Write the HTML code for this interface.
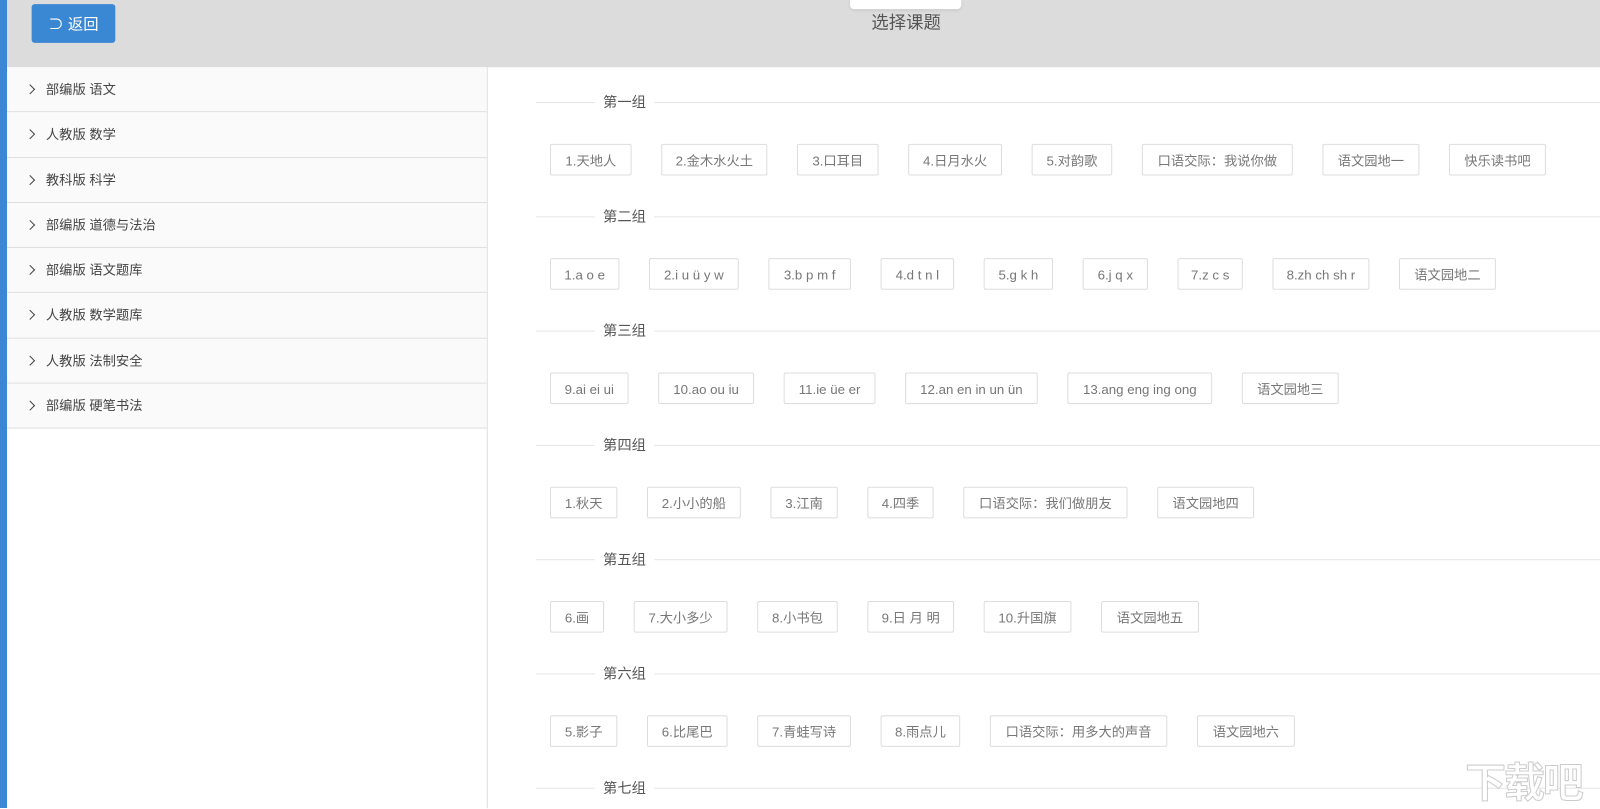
<!DOCTYPE html>
<html><head><meta charset="utf-8"><style>
*{margin:0;padding:0;box-sizing:border-box}
html,body{width:1600px;height:808px;overflow:hidden;background:#fff;font-family:"Liberation Sans","Noto Sans CJK SC",sans-serif}
#w{position:absolute;left:0;top:0;width:1568px;height:792px;transform:scale(1.0204);transform-origin:0 0}
.hd{position:absolute;left:0;top:0;width:1568px;height:66px;background:#dcdcdc}
.strip{position:absolute;left:0;top:0;width:7px;height:792px;background:#3b87d6}
.btn{position:absolute;left:31px;top:4px;width:82px;height:38px;background:#3a87d4;border-radius:3px;color:#fff;font-size:15px;line-height:40px;padding-top:1px;text-align:center}
.tab{position:absolute;left:833px;top:0;width:109px;height:9px;background:#fff;border-radius:0 0 4px 4px;box-shadow:0 1px 3px rgba(0,0,0,.1)}
.title{position:absolute;left:0;width:1776px;top:8px;text-align:center;font-size:17px;color:#555}
.sb{position:absolute;left:7px;top:66px;width:471px;height:726px;background:#fff;border-right:1px solid #ddd}
.it{height:44.3px;border-bottom:1px solid #ddd;background:#fafafa;font-size:13px;color:#444;line-height:43px;padding-left:38px;position:relative}
.it:before{content:"";position:absolute;left:19px;top:18px;width:6px;height:6px;border-top:1px solid #444;border-right:1px solid #444;transform:rotate(45deg)}
.g{position:absolute;left:525px;width:1043px;height:1px;background:#e6e6e6}
.gl{position:absolute;left:583px;background:#fff;padding:0 8px;font-size:14px;color:#555;line-height:20px}
.row{position:absolute;left:539px;display:flex;gap:29px}
.row span{display:block;height:31px;border:1px solid #ddd;border-radius:2px;font-size:13px;color:#777;line-height:31px;text-align:center;white-space:nowrap}
.wm{position:absolute;left:1436px;top:735px;font-size:40px;font-weight:bold;color:#fff;-webkit-text-stroke:1px #ccc;letter-spacing:-2px}
</style></head><body><div id="w">
<div class="hd"></div>
<div class="tab"></div>
<div class="title">选择课题</div>
<div class="btn">&#x2283; 返回</div>
<div class="sb">
<div class="it">部编版 语文</div><div class="it">人教版 数学</div><div class="it">教科版 科学</div><div class="it">部编版 道德与法治</div><div class="it">部编版 语文题库</div><div class="it">人教版 数学题库</div><div class="it">人教版 法制安全</div><div class="it">部编版 硬笔书法</div>
</div>
<div class="strip"></div>

<div class="g" style="top:100px"></div><div class="gl" style="top:90px">第一组</div>
<div class="row" style="top:141px"><span style="width:80px">1.天地人</span><span style="width:104px">2.金木水火土</span><span style="width:80px">3.口耳目</span><span style="width:92px">4.日月水火</span><span style="width:79px">5.对韵歌</span><span style="width:148px">口语交际：我说你做</span><span style="width:95px">语文园地一</span><span style="width:95px">快乐读书吧</span></div>

<div class="g" style="top:212px"></div><div class="gl" style="top:202px">第二组</div>
<div class="row" style="top:253px"><span style="width:68px">1.a o e</span><span style="width:88px">2.i u ü y w</span><span style="width:81px">3.b p m f</span><span style="width:72px">4.d t n l</span><span style="width:68px">5.g k h</span><span style="width:64px">6.j q x</span><span style="width:64px">7.z c s</span><span style="width:95px">8.zh ch sh r</span><span style="width:95px">语文园地二</span></div>

<div class="g" style="top:324px"></div><div class="gl" style="top:314px">第三组</div>
<div class="row" style="top:365px"><span style="width:77px">9.ai ei ui</span><span style="width:94px">10.ao ou iu</span><span style="width:90px">11.ie üe er</span><span style="width:130px">12.an en in un ün</span><span style="width:142px">13.ang eng ing ong</span><span style="width:95px">语文园地三</span></div>

<div class="g" style="top:436px"></div><div class="gl" style="top:426px">第四组</div>
<div class="row" style="top:477px"><span style="width:66px">1.秋天</span><span style="width:92px">2.小小的船</span><span style="width:66px">3.江南</span><span style="width:65px">4.四季</span><span style="width:161px">口语交际：我们做朋友</span><span style="width:95px">语文园地四</span></div>

<div class="g" style="top:548px"></div><div class="gl" style="top:538px">第五组</div>
<div class="row" style="top:589px"><span style="width:53px">6.画</span><span style="width:92px">7.大小多少</span><span style="width:79px">8.小书包</span><span style="width:85px">9.日 月 明</span><span style="width:86px">10.升国旗</span><span style="width:96px">语文园地五</span></div>

<div class="g" style="top:660px"></div><div class="gl" style="top:650px">第六组</div>
<div class="row" style="top:701px"><span style="width:66px">5.影子</span><span style="width:79px">6.比尾巴</span><span style="width:92px">7.青蛙写诗</span><span style="width:78px">8.雨点儿</span><span style="width:174px">口语交际：用多大的声音</span><span style="width:96px">语文园地六</span></div>

<div class="g" style="top:772px"></div><div class="gl" style="top:762px">第七组</div>
<div class="wm">下载吧</div>
</div></body></html>
